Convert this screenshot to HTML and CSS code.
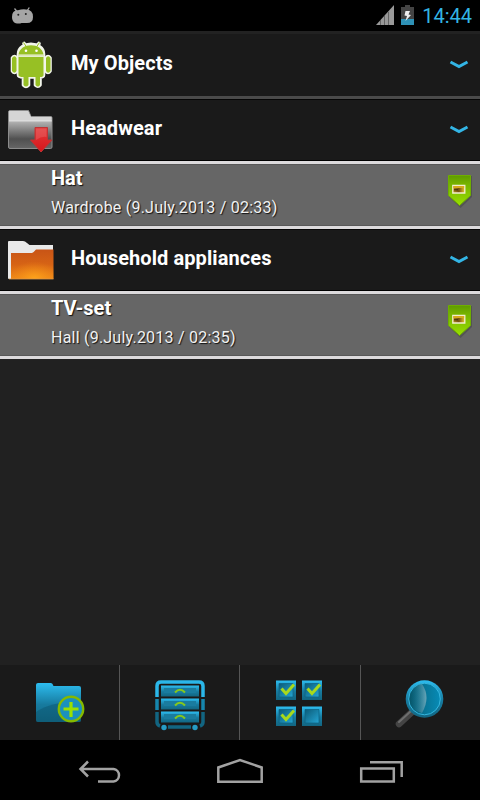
FILE: index.html
```html
<!DOCTYPE html>
<html lang="en">
<head>
<meta charset="utf-8">
<title>My Objects</title>
<link rel="stylesheet" href="styles.css">
</head>
<body>
<div class="screen">
  <header class="status">
    <svg width="40" height="31" viewBox="0 0 40 31"><g fill="#a5a5a5"><path d="M12 17Q12 10 18 10.300Q22 9 26 9.500Q33 9.500 33 17Q33 23 27 23H21.500Q19 24 15 23Q12 21 12 17Z"/><path d="M14.500 8.500l2.500 3M29.300 7.500l-2 3" stroke="#a5a5a5" stroke-width="1.300"/></g><circle cx="18.300" cy="14.700" r="1" fill="#222"/><circle cx="25.800" cy="14" r="1" fill="#222"/></svg>
    <div class="status-right">
      <svg width="50" height="31" viewBox="370 0 50 31"><path d="M376 25L394 5V25Z" fill="#999"/><path d="M380.500 20v5M384.500 16v9M388.500 12v13" stroke="#555" stroke-width=".8"/><path d="M401 7h4V5h5v2h4v13h-13z" fill="#444"/><path d="M401 19h13v6h-13z" fill="#2e91b6"/><path d="M405.500 11H410L408.500 14.500L411 15L405.500 21L407 16L404.500 15.500Z" fill="#eee"/></svg>
      <span class="clock">14:44</span>
    </div>
  </header>

  <main class="list">
    <section class="group first">
      <svg class="icon" width="71" height="62" viewBox="0 34 71 62"><g stroke="#f2f5ea" stroke-width="3.600" stroke-linejoin="round" stroke-linecap="round" fill="#f2f5ea"><path d="M18.500 54C18.500 41 43.500 41 43.500 54V75Q43.500 77 40 77V85Q38 87.500 35.500 85V77H28.500V85Q26 87.500 23.500 85V77Q18.500 77 18.500 75ZM24 43.500L26 47M39 43.500L37 47"/><path d="M12.500 58Q14.500 55 16.500 58V71Q14.500 74 12.500 71ZM46 58Q48 55 50 58V71Q48 74 46 71Z"/></g><g fill="#97c024"><path d="M18.500 54.500C20 42 42 42 43.500 54.500ZM18.500 57H43.500V75Q43.500 77 40 77V85Q38 88 35.500 85V77H28.500V85Q26 88 23.500 85V77Q18.500 77 18.500 75Z"/><path d="M12 58Q14.500 54.500 16.500 58V71Q14.500 74.500 12 71ZM46 58Q48 54.500 50.500 58V71Q48 74.500 46 71Z"/><path d="M23.500 42.500l3 4.500M39.500 42.500l-3 4.500" stroke="#97c024"/></g><path d="M18 55.800H44" stroke="#dce8b7" stroke-width="1.600"/><circle cx="26" cy="50.700" r="1.300" fill="#fff"/><circle cx="36.500" cy="50.700" r="1.300" fill="#fff"/></svg>
      <h2>My Objects</h2>
      <svg class="chev" width="20" height="12" viewBox="0 0 20 12"><path d="M1.500 3L10 7.500L18.500 3" /></svg>
    </section>
    <section class="group">
      <svg class="icon" width="71" height="62" viewBox="0 99 71 62"><defs><linearGradient id="gf" x2="0" y2="1"><stop stop-color="#d8d8d8"/><stop offset=".25" stop-color="#bbb"/><stop offset=".75" stop-color="#505050"/><stop offset="1" stop-color="#666"/></linearGradient><linearGradient id="rd" x2="0" y2="1"><stop stop-color="#e23a3a"/><stop offset="1" stop-color="#d9151b"/></linearGradient></defs><path d="M8.500 112Q8.500 110.500 10 110.500H28.500L31 116.500H51Q52 116.500 52 118V147Q52 148.500 50.500 148.500H10Q8.500 148.500 8.500 147Z" fill="url(#gf)" stroke="#8c8c8c"/><path d="M9 112Q9 111 10 111H28L31 117H51.500V121H9Z" fill="#d5d5d5"/><path d="M9 121H52" stroke="#eee" stroke-width=".7"/><path d="M35 127.500H47.500V140H52L41 152L30.500 140H35Z" fill="url(#rd)" stroke="#bd3435"/><path d="M36 128.500H46.500V137Q42 136 36 140Z" fill="#fff" opacity=".13"/></svg>
      <h2>Headwear</h2>
      <svg class="chev" width="20" height="12" viewBox="0 0 20 12"><path d="M1.500 3L10 7.500L18.500 3" /></svg>
    </section>
    <article class="item">
      <div class="text"><h3>Hat</h3><p>Wardrobe (9.July.2013 / 02:33)</p></div>
      <svg class="tag" width="36" height="40" viewBox="444 172 36 40"><defs><linearGradient id="tg" x2="0" y2="1"><stop stop-color="#5e9b00"/><stop offset=".25" stop-color="#74b000"/><stop offset="1" stop-color="#98e000"/></linearGradient><linearGradient id="ph"><stop stop-color="#b68b20"/><stop offset=".5" stop-color="#745011"/><stop offset="1" stop-color="#f0c52c"/></linearGradient></defs><g id="tagShape"><path d="M449 176H472V197L460.500 208L449 197Z" fill="#333" opacity=".35"/><path d="M448.500 175.500H470.500V195.500L459.500 205.500L448.500 195.500Z" fill="url(#tg)" stroke="#6fae00"/><path d="M452.800 185.300h12v7.700h-12z" fill="url(#ph)" stroke="#f2efcf" stroke-width="1.300"/><path d="M453.500 186h10.600v2h-10.600z" fill="#d8aa1c"/><path d="M454 189.300h4v1h-4z" fill="#332410"/></g></svg>
    </article>
    <section class="group">
      <svg class="icon" width="71" height="62" viewBox="0 229 71 62"><defs><linearGradient id="or" x2="0" y2="1"><stop stop-color="#c85416"/><stop offset=".5" stop-color="#d66315"/><stop offset="1" stop-color="#f18a17"/></linearGradient><radialGradient id="og" cx=".55" cy="1" r=".6"><stop stop-color="#ffa51b"/><stop offset="1" stop-color="#f18a17" stop-opacity="0"/></radialGradient></defs><path d="M8 242Q8 241 9 241H23Q25 241 27 243L29.500 245H53V253L12 279H9Q8 279 8 278Z" fill="#e9e9e9"/><path d="M11 253H32Q34 252 36 249.500H53.500V279H11Z" fill="url(#or)"/><path d="M11 253H32Q34 252 36 249.500H53.500V279H11Z" fill="url(#og)"/><path d="M9 279H53.500" stroke="#d8964a" stroke-width=".8"/></svg>
      <h2>Household appliances</h2>
      <svg class="chev" width="20" height="12" viewBox="0 0 20 12"><path d="M1.500 3L10 7.500L18.500 3" /></svg>
    </section>
    <article class="item">
      <div class="text"><h3>TV-set</h3><p>Hall (9.July.2013 / 02:35)</p></div>
      <svg class="tag" width="36" height="40" viewBox="444 172 36 40"><use href="#tagShape"/></svg>
    </article>
  </main>

  <nav class="tools">
    <div class="tool"><svg width="119" height="75" viewBox="0 665 119 75"><defs><linearGradient id="bl" x2="0" y2="1"><stop stop-color="#2dbdf0"/><stop offset=".55" stop-color="#177b9f"/><stop offset="1" stop-color="#126682"/></linearGradient></defs><path d="M36 685Q36 683 38 683H51Q52.500 683 53.500 686H79Q81 686 81 688V720Q81 722 79 722H38Q36 722 36 720Z" fill="url(#bl)"/><path d="M36 712Q50 702 81 701V720Q81 722 79 722H38Q36 722 36 720Z" fill="#0c566f" opacity=".5"/><circle cx="71" cy="709" r="12.200" fill="#1b91bd" stroke="#85b900" stroke-width="2.400"/><path d="M71 702v15M63.500 709h15" stroke="#9be000" stroke-width="3.200"/></svg></div>
    <div class="tool"><svg width="119" height="75" viewBox="120 665 119 75"><g fill="none" stroke-width="3.500"><path d="M157 697V686Q157 682 161 682H199Q203 682 203 686V697" stroke="#2bb7e9"/><path d="M157 699V710M203 699V710" stroke="#1686ad"/><path d="M157 712V722Q157 725 160 726M203 712V722Q203 725 200 726M168 727H191" stroke="#126581"/></g><g id="drawer"><path d="M161 685.500h38v11h-38z" fill="url(#bl)"/><path d="M164 688h32v5h-32z" fill="#1a7c9f"/><path d="M175 692.500Q180 687 185 692.500" fill="none" stroke="#86c81d" stroke-width="2"/></g><use href="#drawer" y="13"/><use href="#drawer" y="26"/><circle cx="164" cy="727.500" r="2.700" fill="#269cc5"/><circle cx="195" cy="727.500" r="2.700" fill="#269cc5"/></svg></div>
    <div class="tool wide"><svg width="120" height="75" viewBox="240 665 120 75"><defs><linearGradient id="bx" x2="1" y2="1"><stop stop-color="#0c5b78"/><stop offset="1" stop-color="#24a5d3"/></linearGradient></defs><g id="box"><path d="M276 680.500h20v19.500h-20z" fill="url(#bl)"/><path d="M279 683.500h14v13.500h-14z" fill="url(#bx)" stroke="#0c607f" stroke-width=".7"/></g><use href="#box" x="26"/><use href="#box" y="26"/><use href="#box" x="26" y="26"/><g fill="none" stroke="#a8d91c" stroke-width="3"><path id="check" d="M281.500 688.500L286 693.500L294 684.500"/><use href="#check" x="26"/><use href="#check" y="26"/></g></svg></div>
    <div class="tool"><svg width="119" height="75" viewBox="361 665 119 75"><defs><linearGradient id="ln"><stop stop-color="#075467"/><stop offset=".5" stop-color="#087596"/><stop offset="1" stop-color="#078bb6"/></linearGradient><linearGradient id="sh"><stop stop-color="#086c88" stop-opacity="0"/><stop offset="1" stop-color="#9cbcc6"/></linearGradient></defs><path d="M412 712L399 724" stroke="#444" stroke-width="6.500" stroke-linecap="round"/><path d="M411 711L399 722" stroke="#6e6e6e" stroke-width="2" stroke-linecap="round"/><circle cx="424.500" cy="699" r="18.800" fill="url(#bl)"/><circle cx="424.500" cy="699" r="15.800" fill="url(#ln)" stroke="#35b6df"/><path d="M422 684Q431 697 422 713Q411 711 409.500 700Q410 686 422 684Z" fill="url(#sh)" opacity=".65"/></svg></div>
  </nav>

  <footer class="nav">
    <svg width="160" height="60" viewBox="0 740 160 60"><path d="M81 769H113.500A6.300 6.300 0 0 1 113.500 781.500H98M88 761.500L80.500 769L88 776.500"/></svg>
    <svg width="160" height="60" viewBox="160 740 160 60"><path d="M218.300 781.700V767.500L240 760L261.700 767.500V781.700Z"/></svg>
    <svg width="160" height="60" viewBox="320 740 160 60"><path d="M361.200 768.500H393.800V781.500H361.200ZM370 762.300H401.700V777"/></svg>
  </footer>
</div>
</body>
</html>
```
FILE: styles.css
```css
* { box-sizing: border-box; }
body { margin: 0; background: #000; font-family: Roboto, "Liberation Sans", sans-serif; }
svg { display: block; flex: none; }
h2, h3, p { margin: 0; white-space: nowrap; }
.screen { width: 480px; height: 800px; display: flex; flex-direction: column; background: #212121; overflow: hidden; }
.status { height: 31px; flex: none; background: #000; display: flex; justify-content: space-between; }
.status-right { display: flex; padding-right: 8px; }
.clock { width: 52px; font-size: 20px; line-height: 32px; color: #33b5e5; text-align: right; white-space: nowrap; }
.list { flex: 1; }
.group { height: 62px; display: flex; align-items: center; background: #1a1a1a; border-top: 1px solid #050505; border-bottom: 1px solid #000; padding-right: 11px; }
.group.first { height: 68px; border-top: 3px solid #222; border-bottom: 3px solid #4a4a4a; }
.group h2 { flex: 1; font-size: 20px; line-height: 24px; font-weight: 700; letter-spacing: 0.08px; color: #fff; padding-bottom: 4px; }
.group.first h2 { padding-bottom: 5px; }
.chev { fill: none; stroke: #33b5e5; stroke-width: 3; }
.item { height: 68px; display: flex; justify-content: space-between; background: #666; border-top: 3px solid #dcdadc; border-bottom: 3px solid #dcdadc; box-shadow: inset 0 1px #585858, inset 0 -1px #585858; padding-left: 51px; }
.text { padding-top: 2px; color: #fff; text-shadow: 1px 1px 1px #111; }
.text h3 { font-size: 20px; line-height: 25px; font-weight: 700; }
.text p { font-size: 16px; line-height: 20px; margin-top: 7px; letter-spacing: 0.22px; color: #f2f2f2; }
.tag { margin-top: 8px; }
.tools { height: 75px; flex: none; display: flex; background: #1a1a1a; }
.tool { width: 120px; border-right: 1px solid #555; }
.tool.wide { width: 121px; }
.tool:last-child { width: 119px; border: 0; }
.nav { height: 60px; flex: none; display: flex; background: #000; }
.nav path { fill: none; stroke: #a2a2a2; stroke-width: 2.5; }
```
